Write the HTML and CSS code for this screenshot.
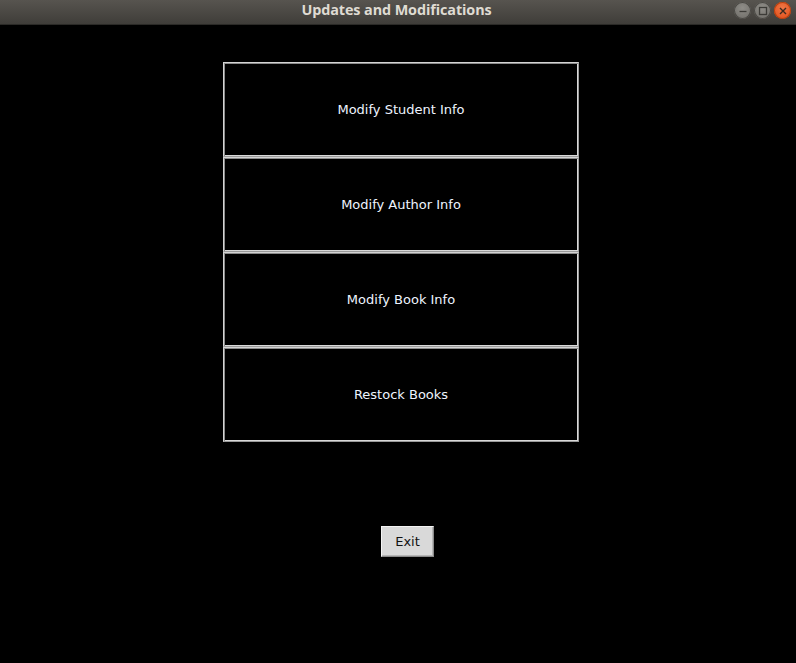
FILE: index.html
```html
<!DOCTYPE html>
<html>
<head>
<meta charset="utf-8">
<link rel="stylesheet" href="styles.css">
</head>
<body>
<div class="titlebar">
  <span class="title">Updates and Modifications</span>
  <div class="controls">
    <span class="ctl ctl-min"><svg width="16" height="16" viewBox="0 0 16 16"><line x1="4.5" y1="8.5" x2="11.5" y2="8.5" stroke="#3c3b37" stroke-width="1.3"/></svg></span>
    <span class="ctl ctl-max"><svg width="16" height="16" viewBox="0 0 16 16"><rect x="4.5" y="4.5" width="7" height="7" fill="none" stroke="#3c3b37" stroke-width="1.3"/></svg></span>
    <span class="ctl ctl-close"><svg width="16" height="16" viewBox="0 0 16 16"><path d="M5 5 L11 11 M11 5 L5 11" stroke="#3c2a20" stroke-width="1.4"/></svg></span>
  </div>
</div>
<div class="content">
  <div class="menu">
    <div class="btn">Modify Student Info</div>
    <div class="btn">Modify Author Info</div>
    <div class="btn">Modify Book Info</div>
    <div class="btn">Restock Books</div>
  </div>
  <div class="exit">Exit</div>
</div>
</body>
</html>
```
FILE: styles.css
```css
html, body {
  margin: 0;
  padding: 0;
  background: #000;
  height: 100%;
  overflow: hidden;
}
.titlebar {
  box-sizing: border-box;
  height: 25px;
  padding-bottom: 5px;
  background: linear-gradient(#57544f, #3f3d39);
  display: flex;
  align-items: center;
  justify-content: center;
  position: relative;
  border-bottom: 1px solid #2b2a27;
}
.title {
  font-family: "Open Sans", "DejaVu Sans", sans-serif;
  font-weight: 700;
  font-size: 14.4px;
  color: #dfdbd2;
  letter-spacing: -0.1px;
  margin-left: -3px;
}
.controls {
  position: absolute;
  right: 5px;
  top: 2px;
  display: flex;
  gap: 3px;
}
.ctl {
  width: 17px;
  height: 17px;
  border-radius: 50%;
  display: flex;
  align-items: center;
  justify-content: center;
  background: radial-gradient(circle at 50% 35%, #8f8d88, #6c6a65);
  box-shadow: inset 0 0 0 1px #4a4844;
}
.ctl-close {
  background: radial-gradient(circle at 50% 35%, #f07746, #df4a16);
  box-shadow: inset 0 0 0 1px #b8400f;
}
.content {
  display: flex;
  flex-direction: column;
  padding-left: 223px;
  padding-top: 37px;
}
.menu {
  width: 356px;
  display: flex;
  flex-direction: column;
}
.btn {
  box-sizing: border-box;
  height: 95px;
  border: 1px solid #d4d4d4;
  border-right-color: #9a9a9a;
  border-bottom-color: #9a9a9a;
  box-shadow: inset 1px 1px 0 #8a8a8a, inset -1px -1px 0 #d9d9d9;
  display: flex;
  align-items: center;
  justify-content: center;
  font-family: "DejaVu Sans", sans-serif;
  font-size: 13px;
  color: #eef4ff;
}
.exit {
  box-sizing: border-box;
  margin-top: 84px;
  margin-left: 158px;
  width: 53px;
  height: 31px;
  background: #d9d9d9;
  border: 1px solid #f4f4f4;
  border-right-color: #8a8a8a;
  border-bottom-color: #8a8a8a;
  box-shadow: inset -1px -1px 0 #b5b5b5;
  display: flex;
  align-items: center;
  justify-content: center;
  font-family: "DejaVu Sans", sans-serif;
  font-size: 13px;
  color: #111;
}
```
